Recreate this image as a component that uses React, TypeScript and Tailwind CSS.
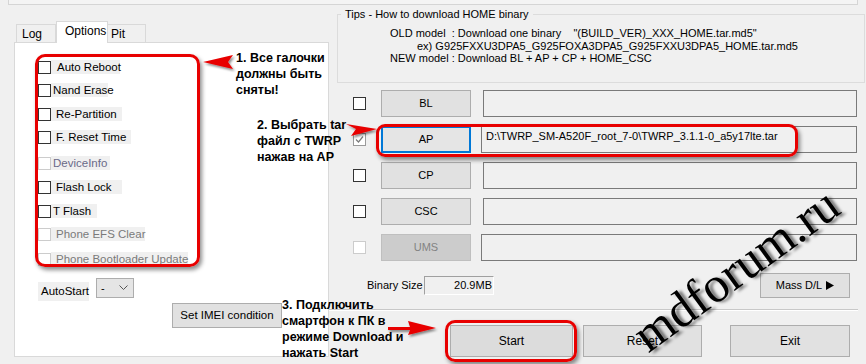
import React from "react";

type Chk = { label: string; mt: string; w: string; pl: string; disabled?: boolean; color?: string };

const checks: Chk[] = [
  { label: "Auto Reboot", mt: "mt-[17px]", w: "w-[69px]", pl: "pl-[6px]" },
  { label: "Nand Erase", mt: "mt-[9px]", w: "w-[57px]", pl: "pl-[2px]" },
  { label: "Re-Partition", mt: "mt-[10px]", w: "w-[71px]", pl: "pl-[5px]" },
  { label: "F. Reset Time", mt: "mt-[9px]", w: "w-[80px]", pl: "pl-[5px]" },
  { label: "DeviceInfo", mt: "mt-[12px]", w: "w-[59px]", pl: "pl-[2px]", disabled: true, color: "text-[#6a6a88]" },
  { label: "Flash Lock", mt: "mt-[10px]", w: "w-[71px]", pl: "pl-[5px]" },
  { label: "T Flash", mt: "mt-[10px]", w: "w-[46px]", pl: "pl-[2px]" },
  { label: "Phone EFS Clear", mt: "mt-[9px]", w: "w-[94px]", pl: "pl-[5px]", disabled: true, color: "text-[#7a7a7a]" },
  { label: "Phone Bootloader Update", mt: "mt-[11px]", w: "w-[137px]", pl: "pl-[5px]", disabled: true, color: "text-[#7a7a7a]" },
];

type Row = { name: string; check: "on" | "off" | "dis" | "checked"; disabled?: boolean; focus?: boolean; value?: string; fieldMl: string };

const rows: Row[] = [
  { name: "BL", check: "off", fieldMl: "ml-[12px]" },
  { name: "AP", check: "checked", focus: true, value: "D:\\TWRP_SM-A520F_root_7-0\\TWRP_3.1.1-0_a5y17lte.tar", fieldMl: "ml-[10px]" },
  { name: "CP", check: "off", fieldMl: "ml-[12px]" },
  { name: "CSC", check: "off", fieldMl: "ml-[12px]" },
  { name: "UMS", check: "dis", disabled: true, fieldMl: "ml-[10px]" },
];

function Box({ state }: { state: "on" | "off" | "dis" | "checked" }) {
  if (state === "checked") {
    return (
      <div className="w-[13px] h-[13px] border border-[#9a9a9a] bg-white flex items-center justify-center">
        <svg width="9" height="9" viewBox="0 0 9 9">
          <polyline points="1,4.5 3.5,7 8,1.5" fill="none" stroke="#7a7a7a" strokeWidth="1.2" />
        </svg>
      </div>
    );
  }
  const border = state === "dis" ? "border-[#cccccc]" : "border-[#333333]";
  return <div className={`w-[13px] h-[13px] border bg-white ${border}`} />;
}

export default function App() {
  const ui = { fontFamily: '"Liberation Sans", Arial, sans-serif' };
  return (
    <div
      className="relative w-[866px] h-[364px] overflow-hidden bg-[#f0f0f0] text-[11px] text-black"
      style={ui}
    >
      {/* top strip */}
      <div className="ml-[8px] w-[850px] h-[5px] border-x border-b border-[#d5d5d5] bg-[#f4f4f4]" />

      <div className="flex items-start">
        {/* left column */}
        <div className="ml-[14px] mt-[16px] w-[315px] shrink-0">
          <div className="flex items-end h-[21px] pl-[2px]">
            <div className="w-[40px] h-[18px] border border-b-0 border-[#d9d9d9] bg-[#f0f0f0] pl-[5px] leading-[18px] text-[12px]">
              Log
            </div>
            <div className="w-[52px] h-[22px] -mb-px border border-b-0 border-[#d9d9d9] bg-white pl-[8px] leading-[19px] text-[12px] relative z-10">
              Options
            </div>
            <div className="w-[38px] h-[18px] border border-b-0 border-l-0 border-[#d9d9d9] bg-[#f0f0f0] pl-[3px] leading-[18px] text-[12px]">
              Pit
            </div>
          </div>
          <div className="w-[315px] h-[315px] border border-[#d9d9d9] bg-white pl-[23px] flex flex-col">
            {checks.map((c) => (
              <div key={c.label} className={`flex items-center h-[14px] ${c.mt}`}>
                <Box state={c.disabled ? "dis" : "off"} />
                <div className={`h-[14px] bg-[#f0f0f0] leading-[14px] whitespace-nowrap text-[11.5px] ${c.w} ${c.pl} ${c.color ?? ""}`}>
                  {c.label}
                </div>
              </div>
            ))}
            <div className="flex items-start mt-[12px]">
              <div className="w-[51px] h-[19px] mt-[4px] bg-[#f0f0f0] pl-[3px] leading-[19px] text-[11.5px]">AutoStart</div>
              <div className="ml-[7px] w-[38px] h-[20px] border border-[#adadad] bg-[#e5e5e5] flex items-center justify-between pl-[4px] pr-[5px]">
                <span className="text-[11px]">-</span>
                <svg width="9" height="6" viewBox="0 0 9 6">
                  <polyline points="0.5,0.5 4.5,4.5 8.5,0.5" fill="none" stroke="#555" strokeWidth="1" />
                </svg>
              </div>
            </div>
            <div className="ml-[134px] mt-[2px] w-[110px] h-[25px] border border-[#adadad] bg-[#e1e1e1] flex items-center justify-center text-[11.5px]">
              Set IMEI condition
            </div>
          </div>
        </div>

        {/* right column */}
        <div className="w-[537px] shrink-0">
          <fieldset className="ml-[8px] mt-[3px] w-[528px] h-[75px] border border-[#dcdcdc]">
            <legend className="ml-[3px] px-[4px] leading-[13px] text-[11px]">Tips - How to download HOME binary</legend>
            <div className="pl-[52px] mt-[6px] leading-[12.5px] text-[11px] whitespace-pre">
              <div>{'OLD model  : Download one binary    "(BUILD_VER)_XXX_HOME.tar.md5"'}</div>
              <div className="pl-[27px]">ex) G925FXXU3DPA5_G925FOXA3DPA5_G925FXXU3DPA5_HOME.tar.md5</div>
              <div>NEW model : Download BL + AP + CP + HOME_CSC</div>
            </div>
          </fieldset>

          <div className="flex flex-col gap-[9px] mt-[7px]">
            {rows.map((r) => (
              <div key={r.name} className="flex items-center h-[27px]">
                <div className="ml-[24px]">
                  <Box state={r.check} />
                </div>
                <div
                  className={`ml-[15px] w-[90px] h-[27px] flex items-center justify-center text-[11px] ${
                    r.disabled
                      ? "bg-[#cccccc] border border-[#bfbfbf] text-[#838383]"
                      : r.focus
                      ? "bg-[#e5e5e5] border-2 border-[#0078d7]"
                      : "bg-[#e1e1e1] border border-[#adadad]"
                  }`}
                >
                  {r.name}
                </div>
                <div
                  className={`${r.fieldMl} h-[27px] border border-[#7a7a7a] bg-[#f0f0f0] pl-[4px] pt-[2px] text-[11px] leading-[14px] ${
                    r.fieldMl === "ml-[10px]" ? "w-[376px]" : "w-[374px]"
                  }`}
                >
                  {r.value ?? ""}
                </div>
              </div>
            ))}
          </div>

          <div className="flex items-center h-[26px] mt-[11px]">
            <div className="ml-[38px] w-[57px] text-[11px]">Binary Size</div>
            <div className="w-[70px] h-[19px] border-t border-l border-[#a0a0a0] border-r border-b border-r-white border-b-white bg-[#f0f0f0] flex items-center justify-end pr-[1px] text-[11px]">
              20.9MB
            </div>
            <div className="ml-[266px] w-[90px] h-[25px] border border-[#adadad] bg-[#e1e1e1] flex items-center justify-center gap-[4px] text-[11px]">
              <span>Mass D/L</span>
              <svg width="8" height="9" viewBox="0 0 8 9">
                <polygon points="0,0 8,4.5 0,9" fill="#000" />
              </svg>
            </div>
          </div>

          <div className="mt-[11px] w-[529px] h-[2px] border-t border-[#c8c8c8] bg-white" />

          <div className="flex mt-[14px]">
            <div className="ml-[121px] w-[123px] h-[32px] border border-[#adadad] bg-[#dcdcdc] flex items-center justify-center text-[12px]">
              Start
            </div>
            <div className="ml-[10px] w-[119px] h-[32px] border border-[#adadad] bg-[#e1e1e1] flex items-center justify-center text-[12px]">
              Reset
            </div>
            <div className="ml-[28px] w-[120px] h-[32px] border border-[#adadad] bg-[#e1e1e1] flex items-center justify-center text-[12px]">
              Exit
            </div>
          </div>
        </div>
      </div>

      {/* annotations: red boxes */}
      <div className="absolute left-[35px] top-[54px] w-[165px] h-[213px] border-[3px] border-[#e80000] rounded-[10px] shadow-[2px_3px_4px_rgba(0,0,0,0.45)]" />
      <div className="absolute left-[376px] top-[124px] w-[422px] h-[33px] border-[3px] border-[#e80000] rounded-[9px] shadow-[2px_3px_4px_rgba(0,0,0,0.45)]" />
      <div className="absolute left-[445px] top-[320px] w-[132px] h-[42px] border-[3px] border-[#e80000] rounded-[10px] shadow-[2px_3px_4px_rgba(0,0,0,0.45)]" />

      {/* arrows */}
      <svg className="absolute left-0 top-0 pointer-events-none" width="866" height="364" viewBox="0 0 866 364">
        <defs>
          <filter id="sh" x="-20%" y="-20%" width="140%" height="160%">
            <feDropShadow dx="1.5" dy="2" stdDeviation="1.2" floodColor="#000" floodOpacity="0.45" />
          </filter>
        </defs>
        <polygon points="203,62 233,55 228,62 233,69" fill="#e80000" filter="url(#sh)" />
        <polygon points="346,124 377,129 351,136 356,129" fill="#e80000" filter="url(#sh)" />
        <polygon points="388,327 410,327 408,321 436,328 408,335 410,330 388,330" fill="#e80000" filter="url(#sh)" />
      </svg>

      {/* annotation texts */}
      <div className="absolute left-[236px] top-[50px] font-bold text-[12.5px] leading-[16px] whitespace-pre" style={ui}>
        {"1. Все галочки\nдолжны быть\nсняты!"}
      </div>
      <div className="absolute left-[257px] top-[117px] font-bold text-[12.5px] leading-[16px] whitespace-pre" style={ui}>
        {"2. Выбрать tar\nфайл с TWRP\nнажав на AP"}
      </div>
      <div className="absolute left-[282px] top-[297px] font-bold text-[12.5px] leading-[16px] whitespace-pre" style={ui}>
        {"3. Подключить\nсмартфон к ПК в\nрежиме Download и\nнажать Start"}
      </div>

      {/* watermark */}
      <div
        className="absolute left-[653px] top-[310px] text-[50px] leading-none whitespace-nowrap origin-bottom-left -rotate-[36deg] text-black [text-shadow:3px_3px_3px_rgba(0,0,0,0.5)]"
        style={{ fontFamily: '"Liberation Serif", "Times New Roman", serif' }}
      >
        mdforum.ru
      </div>
    </div>
  );
}
